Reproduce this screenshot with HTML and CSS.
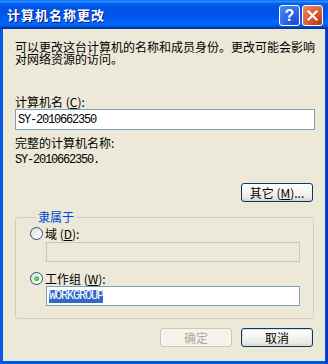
FILE: index.html
```html
<!DOCTYPE html>
<html>
<head>
<meta charset="utf-8">
<link rel="stylesheet" href="styles.css">
</head>
<body>
<div class="window">
  <div class="titlebar">
    <span class="title">计算机名称更改</span>
    <div class="tb-btns">
      <span class="tb-btn help">?</span>
      <span class="tb-btn close"><svg width="13" height="13" viewBox="0 0 13 13"><path d="M2.5 2.5L10.5 10.5M10.5 2.5L2.5 10.5" stroke="#fff" stroke-width="2.2" stroke-linecap="square"/></svg></span>
    </div>
  </div>
  <div class="client">
    <div class="desc"><div class="line">可以更改这台计算机的名称和成员身份。更改可能会影响</div><div class="line">对网络资源的访问。</div></div>
    <div class="label lbl-name">计算机名 (<u>C</u>):</div>
    <div class="input name-input"><span class="mono">SY-2010662350</span></div>
    <div class="label lbl-full">完整的计算机名称:</div>
    <div class="fullname mono">SY-2010662350.</div>
    <div class="row-right more-row"><span class="btn">其它 (<u>M</u>)...</span></div>
    <fieldset class="group">
      <legend>隶属于</legend>
      <div class="radio-row first"><span class="radio"></span><span class="rlabel">域 (<u>D</u>):</span></div>
      <div class="input field disabled"></div>
      <div class="radio-row second"><span class="radio checked"></span><span class="rlabel">工作组 (<u>W</u>):</span></div>
      <div class="input field wg"><span class="sel mono">WORKGROUP</span></div>
    </fieldset>
    <div class="row-right buttons"><span class="btn disabled">确定</span><span class="btn default">取消</span></div>
  </div>
</div>
</body>
</html>
```
FILE: styles.css
```css
* { box-sizing: border-box; }
html, body { margin: 0; padding: 0; }
body {
  width: 328px;
  height: 364px;
  overflow: hidden;
  background: #0054E3;
  font-family: "Noto Sans CJK SC", "Liberation Sans", sans-serif;
  font-size: 12px;
  color: #000;
}
.window {
  width: 328px;
  height: 364px;
  display: flex;
  flex-direction: column;
  background: linear-gradient(to right, #0831D9 0, #166AEE 1px, #0055EA 2px, #0055EA 325px, #0046CF 326px, #0831D9 327px);
}
.titlebar {
  height: 29px;
  flex: none;
  display: flex;
  align-items: center;
  justify-content: space-between;
  padding: 0 5px 0 7px;
  background: linear-gradient(to bottom, #0058EE 0%, #3593FF 4%, #288EFF 6%, #127DFF 8%, #036FFC 10%, #0262EE 14%, #0057E5 20%, #0054E3 24%, #0055EB 56%, #005BF5 66%, #026AFE 76%, #0062EF 86%, #0052D6 92%, #0040AB 94%, #003092 100%);
}
.title {
  color: #fff;
  font-weight: bold;
  font-size: 13px;
  letter-spacing: 1px;
  text-shadow: 1px 1px 0 #0A1883;
  line-height: 14px;
  margin-top: 1px;
}
.tb-btns { display: flex; gap: 2px; margin-top: 2px; }
.tb-btn {
  width: 21px;
  height: 21px;
  border: 1px solid #fff;
  border-radius: 3px;
  display: flex;
  align-items: center;
  justify-content: center;
  color: #fff;
}
.help {
  background: radial-gradient(circle at 80% 90%, #1D4DD0 0, #2A63E6 40%, #4C8BF5 100%);
  font-family: "Liberation Sans", sans-serif;
  font-weight: bold;
  font-size: 16px;
}
.close {
  background: radial-gradient(circle at 85% 90%, #C13A0F 0, #DA5A2D 45%, #EE8A68 100%);
}
.client {
  flex: 1;
  margin: 0 3px 3px;
  padding: 0 10px 0 12px;
  background: #ECE9D8;
  display: flex;
  flex-direction: column;
}
.desc {
  margin: 12px 0 0;
  display: flex;
  flex-direction: column;
}
.desc .line {
  height: 12px;
  line-height: 12px;
  white-space: nowrap;
  overflow: visible;
}
.label { line-height: 12px; white-space: nowrap; }
.lbl-name { margin-top: 31px; }
.lbl-full { margin-top: 7px; }
.mono {
  font-family: "Liberation Mono", monospace;
  font-size: 12px;
  letter-spacing: -1.2px;
}
.input {
  height: 21px;
  border: 1px solid #7F9DB9;
  background: #fff;
  display: flex;
  align-items: center;
  padding-left: 2px;
}
.name-input { margin-top: 1px; }
.fullname { margin-top: 5px; line-height: 12px; }
.row-right { display: flex; justify-content: flex-end; padding-right: 2px; }
.more-row { margin-top: 17px; }
.btn {
  width: 72px;
  height: 19px;
  border: 1px solid #003C74;
  border-radius: 3px;
  background: linear-gradient(to bottom, #FFFFFF 0%, #F6F6F3 40%, #ECEBE6 80%, #D6D0C5 100%);
  display: flex;
  align-items: center;
  justify-content: center;
  line-height: 12px;
  white-space: nowrap;
}
.btn.disabled {
  border-color: #C9C7BA;
  background: #F5F4EA;
  color: #ACA899;
}
.btn.default {
  box-shadow: inset 0 0 0 1px #E3E1D6;
}
.buttons { gap: 9px; margin-top: 9px; }
.group {
  margin: 9px 1px 0 0;
  padding: 0 0 12px 14px;
  border: 1px solid #D0D0BF;
  border-radius: 3px;
  min-width: 0;
}
.group legend {
  margin-left: 6px;
  padding: 0 2px;
  color: #0046D5;
  line-height: 12px;
}
.radio-row { display: flex; align-items: center; height: 13px; }
.radio-row.first { margin-top: 4px; }
.radio-row.second { margin-top: 10px; }
.radio {
  width: 13px;
  height: 13px;
  border-radius: 50%;
  border: 1px solid #1C5180;
  background: linear-gradient(135deg, #DCDCD7 0%, #F2F2EE 50%, #FFFFFF 100%);
  display: flex;
  align-items: center;
  justify-content: center;
  flex: none;
}
.radio.checked::after {
  content: "";
  width: 5px;
  height: 5px;
  border-radius: 50%;
  background: radial-gradient(circle at 35% 35%, #7DE07A 0, #21A121 100%);
}
.rlabel { margin-left: 2px; line-height: 12px; }
.field {
  margin-left: 16px;
  width: 254px;
  height: 20px;
}
.field.disabled {
  margin-top: 2px;
  border-color: #C9C7BA;
  background: #ECE9D8;
}
.field.wg { margin-top: 1px; }
.sel {
  background: #316AC5;
  color: #fff;
  line-height: 13px;
}
```
